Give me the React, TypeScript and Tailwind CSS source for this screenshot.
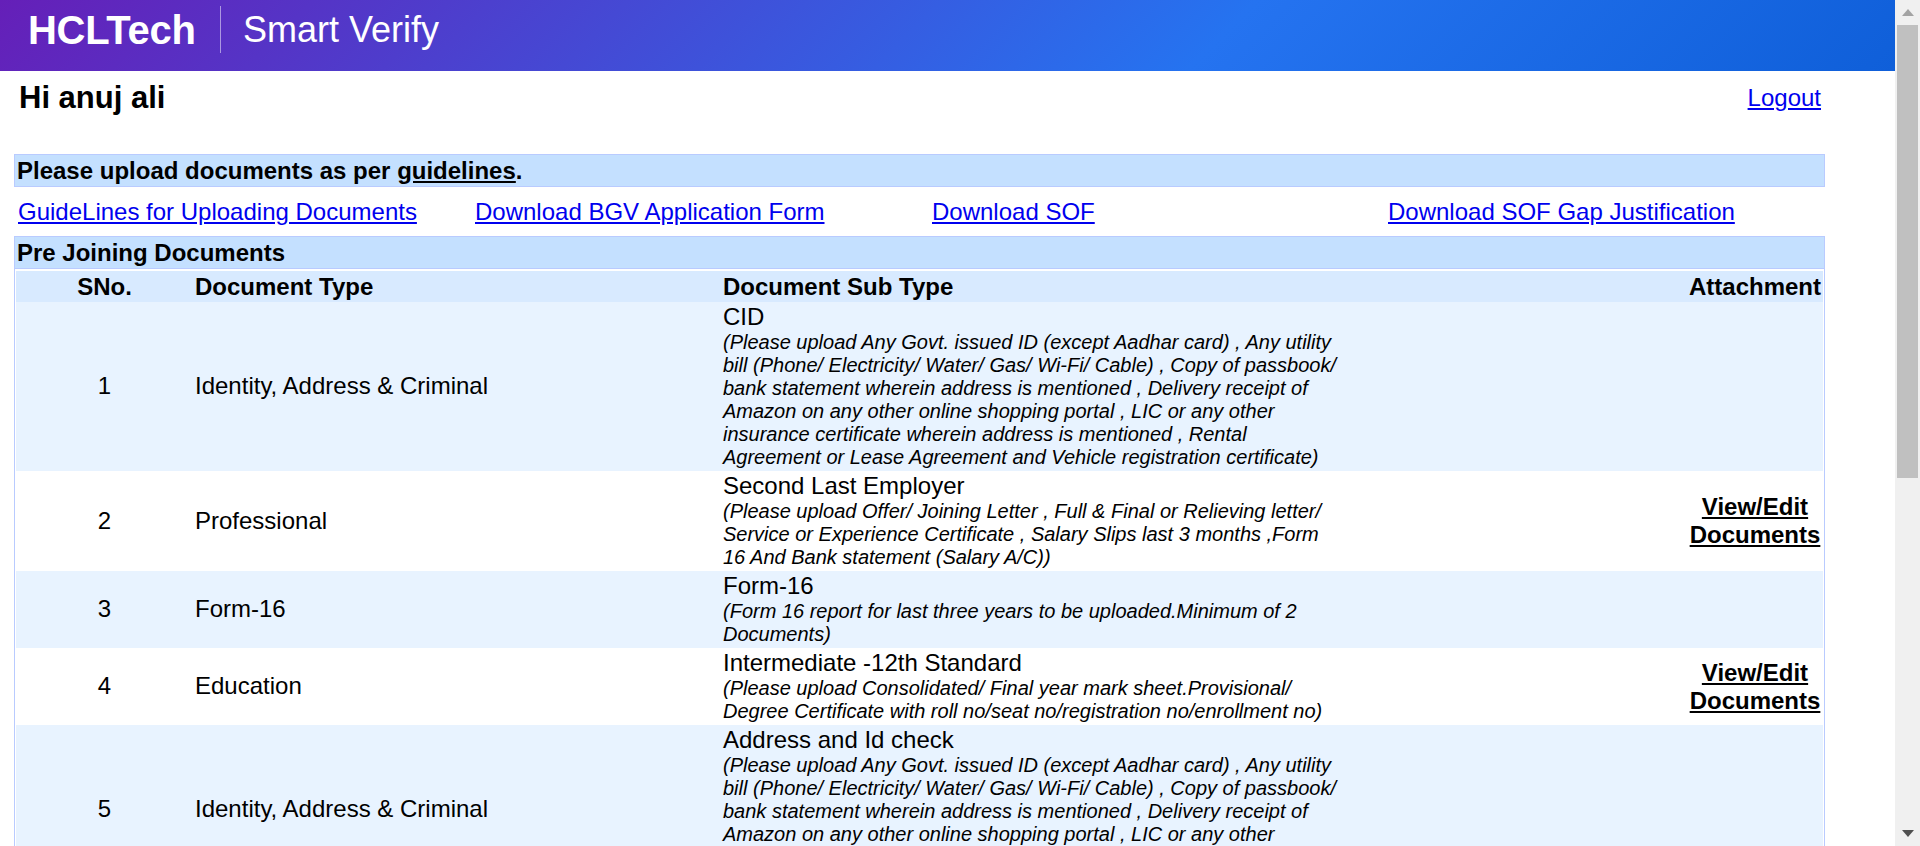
import React from "react";

const anyId =
  "(Please upload Any Govt. issued ID (except Aadhar card) , Any utility bill (Phone/ Electricity/ Water/ Gas/ Wi-Fi/ Cable) , Copy of passbook/ bank statement wherein address is mentioned , Delivery receipt of Amazon on any other online shopping portal , LIC or any other insurance certificate wherein address is mentioned , Rental Agreement or Lease Agreement and Vehicle registration certificate)";

const rows = [
  { no: 1, type: "Identity, Address & Criminal", sub: "CID", note: anyId, edit: false, h: "h-[169px]" },
  {
    no: 2,
    type: "Professional",
    sub: "Second Last Employer",
    note: "(Please upload Offer/ Joining Letter , Full & Final or Relieving letter/ Service or Experience Certificate , Salary Slips last 3 months ,Form 16 And Bank statement (Salary A/C))",
    edit: true,
    h: "h-[100px]",
  },
  {
    no: 3,
    type: "Form-16",
    sub: "Form-16",
    note: "(Form 16 report for last three years to be uploaded.Minimum of 2 Documents)",
    edit: false,
    h: "h-[77px]",
  },
  {
    no: 4,
    type: "Education",
    sub: "Intermediate -12th Standard",
    note: "(Please upload Consolidated/ Final year mark sheet.Provisional/ Degree Certificate with roll no/seat no/registration no/enrollment no)",
    edit: true,
    h: "h-[77px]",
  },
  { no: 5, type: "Identity, Address & Criminal", sub: "Address and Id check", note: anyId, edit: false, h: "h-[169px]" },
];

const topLinks = [
  { label: "GuideLines for Uploading Documents", w: "w-[457px]" },
  { label: "Download BGV Application Form", w: "w-[457px]" },
  { label: "Download SOF", w: "w-[456px]" },
  { label: "Download SOF Gap Justification", w: "w-auto" },
];

export default function App() {
  return (
    <div className="flex h-screen overflow-hidden bg-white font-['Liberation_Sans',Arial,sans-serif] text-black">
      <main className="min-w-0 flex-1 overflow-hidden">
        <header className="flex h-[71px] items-center bg-[linear-gradient(135deg,#651fb8_0%,#2573f0_64%,#0f5fd9_100%)] pb-[12px] pl-[28px] text-white">
          <span className="w-[168px] text-[40px] font-bold tracking-[-0.3px]">HCLTech</span>
          <span className="ml-6 h-[47px] w-px bg-white/50" />
          <span className="ml-[22px] text-[36px]">Smart Verify</span>
        </header>

        <div className="flex h-[83px] items-start justify-between pl-[19px] pr-[74px]">
          <h1 className="pt-[9px] text-[31px] leading-[36px] font-bold">Hi anuj ali</h1>
          <a href="#" className="pt-[13px] text-[24px] leading-[28px] text-[#0000ee] underline">
            Logout
          </a>
        </div>

        <div className="ml-[14px] w-[1811px]">
          <div className="flex h-[33px] items-center border border-[#b9cbff] bg-[#c4e0ff] pl-[2px] text-[24px] font-bold">
            <span>
              Please upload documents as per <a href="#" className="underline">guidelines</a>.
            </span>
          </div>

          <div className="flex h-[49px] items-center pl-[4px] text-[24px] text-[#0000ee]">
            {topLinks.map((l) => (
              <span key={l.label} className={l.w}>
                <a href="#" className="underline">
                  {l.label}
                </a>
              </span>
            ))}
          </div>

          <div className="flex h-[33px] items-center border border-[#b9cbff] bg-[#c4e0ff] pl-[2px] pt-px text-[24px] font-bold">
            Pre Joining Documents
          </div>

          <div className="border-x border-[#b9cbff] px-px pt-[2px]">
            <table className="w-full table-fixed border-collapse text-[24px] leading-[28px]">
              <colgroup>
                <col className="w-[179px]" />
                <col className="w-[528px]" />
                <col className="w-[620px]" />
                <col />
                <col className="w-[136px]" />
              </colgroup>
              <thead>
                <tr className="h-[31px] bg-[#d8eaff] font-bold">
                  <th className="pr-[2px] text-center font-bold">SNo.</th>
                  <th className="text-left font-bold">Document Type</th>
                  <th className="text-left font-bold">Document Sub Type</th>
                  <th />
                  <th className="pr-[2px] text-right font-bold">Attachment</th>
                </tr>
              </thead>
              <tbody>
                {rows.map((r, i) => (
                  <tr key={r.no} className={`${r.h} ${i % 2 === 0 ? "bg-[#e8f3ff]" : "bg-white"}`}>
                    <td className="pb-px pr-[2px] text-center">{r.no}</td>
                    <td className="pb-px">{r.type}</td>
                    <td className="pt-px align-top">
                      <div className="leading-[28px]">{r.sub}</div>
                      <div className="text-[20px] leading-[23px] italic">{r.note}</div>
                    </td>
                    <td />
                    <td className="text-center font-bold">
                      {r.edit && (
                        <a href="#" className="underline">
                          View/Edit Documents
                        </a>
                      )}
                    </td>
                  </tr>
                ))}
              </tbody>
            </table>
          </div>
        </div>
      </main>

      <aside className="flex h-screen w-[25px] shrink-0 flex-col items-center bg-[#f0f0f0]">
        <div className="flex h-[25px] items-center justify-center">
          <svg width="12" height="7" viewBox="0 0 12 7">
            <path d="M6 0L12 7H0z" fill="#a3a3a3" />
          </svg>
        </div>
        <div className="h-[453px] w-[21px] bg-[#c0c0c0]" />
        <div className="flex-1" />
        <div className="flex h-[25px] items-center justify-center">
          <svg width="12" height="7" viewBox="0 0 12 7">
            <path d="M0 0H12L6 7z" fill="#505050" />
          </svg>
        </div>
      </aside>
    </div>
  );
}
